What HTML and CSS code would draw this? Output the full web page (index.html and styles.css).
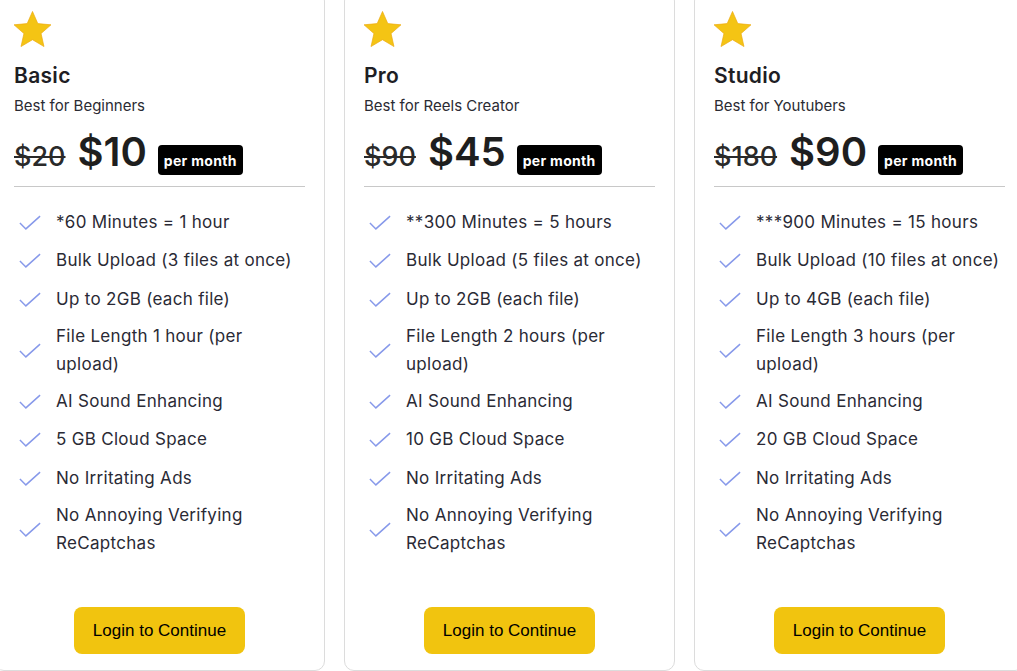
FILE: index.html
```html
<!DOCTYPE html>
<html lang="en">
<head>
<meta charset="utf-8">
<title>Pricing</title>
<link rel="stylesheet" href="styles.css">
</head>
<body>
<div class="pricing">
  <div class="card">
    <svg class="star" viewBox="1.2 1.6 21.6 20.5"><path d="M12 1.6l3.1 7.1 7.7.7-5.8 5.1 1.7 7.6L12 18.1l-6.7 4 1.7-7.6L1.2 9.4l7.7-.7z"/></svg>
    <h2 class="plan">Basic</h2>
    <p class="tagline">Best for Beginners</p>
    <div class="price"><s class="old">$20</s><span class="now">$10</span><span class="per">per month</span></div>
    <ul class="features">
      <li><svg class="check" viewBox="0 0 24 16"><path d="M1 8.5l6.5 6.5L23 1"/></svg><span>*60 Minutes = 1 hour</span></li>
      <li><svg class="check" viewBox="0 0 24 16"><path d="M1 8.5l6.5 6.5L23 1"/></svg><span>Bulk Upload (3 files at once)</span></li>
      <li><svg class="check" viewBox="0 0 24 16"><path d="M1 8.5l6.5 6.5L23 1"/></svg><span>Up to 2GB (each file)</span></li>
      <li><svg class="check" viewBox="0 0 24 16"><path d="M1 8.5l6.5 6.5L23 1"/></svg><span>File Length 1 hour (per upload)</span></li>
      <li><svg class="check" viewBox="0 0 24 16"><path d="M1 8.5l6.5 6.5L23 1"/></svg><span>AI Sound Enhancing</span></li>
      <li><svg class="check" viewBox="0 0 24 16"><path d="M1 8.5l6.5 6.5L23 1"/></svg><span>5 GB Cloud Space</span></li>
      <li><svg class="check" viewBox="0 0 24 16"><path d="M1 8.5l6.5 6.5L23 1"/></svg><span>No Irritating Ads</span></li>
      <li><svg class="check" viewBox="0 0 24 16"><path d="M1 8.5l6.5 6.5L23 1"/></svg><span>No Annoying Verifying ReCaptchas</span></li>
    </ul>
    <button class="cta">Login to Continue</button>
  </div>
  <div class="card">
    <svg class="star" viewBox="1.2 1.6 21.6 20.5"><path d="M12 1.6l3.1 7.1 7.7.7-5.8 5.1 1.7 7.6L12 18.1l-6.7 4 1.7-7.6L1.2 9.4l7.7-.7z"/></svg>
    <h2 class="plan">Pro</h2>
    <p class="tagline">Best for Reels Creator</p>
    <div class="price"><s class="old">$90</s><span class="now">$45</span><span class="per">per month</span></div>
    <ul class="features">
      <li><svg class="check" viewBox="0 0 24 16"><path d="M1 8.5l6.5 6.5L23 1"/></svg><span>**300 Minutes = 5 hours</span></li>
      <li><svg class="check" viewBox="0 0 24 16"><path d="M1 8.5l6.5 6.5L23 1"/></svg><span>Bulk Upload (5 files at once)</span></li>
      <li><svg class="check" viewBox="0 0 24 16"><path d="M1 8.5l6.5 6.5L23 1"/></svg><span>Up to 2GB (each file)</span></li>
      <li><svg class="check" viewBox="0 0 24 16"><path d="M1 8.5l6.5 6.5L23 1"/></svg><span>File Length 2 hours (per upload)</span></li>
      <li><svg class="check" viewBox="0 0 24 16"><path d="M1 8.5l6.5 6.5L23 1"/></svg><span>AI Sound Enhancing</span></li>
      <li><svg class="check" viewBox="0 0 24 16"><path d="M1 8.5l6.5 6.5L23 1"/></svg><span>10 GB Cloud Space</span></li>
      <li><svg class="check" viewBox="0 0 24 16"><path d="M1 8.5l6.5 6.5L23 1"/></svg><span>No Irritating Ads</span></li>
      <li><svg class="check" viewBox="0 0 24 16"><path d="M1 8.5l6.5 6.5L23 1"/></svg><span>No Annoying Verifying ReCaptchas</span></li>
    </ul>
    <button class="cta">Login to Continue</button>
  </div>
  <div class="card">
    <svg class="star" viewBox="1.2 1.6 21.6 20.5"><path d="M12 1.6l3.1 7.1 7.7.7-5.8 5.1 1.7 7.6L12 18.1l-6.7 4 1.7-7.6L1.2 9.4l7.7-.7z"/></svg>
    <h2 class="plan">Studio</h2>
    <p class="tagline">Best for Youtubers</p>
    <div class="price"><s class="old">$180</s><span class="now">$90</span><span class="per">per month</span></div>
    <ul class="features">
      <li><svg class="check" viewBox="0 0 24 16"><path d="M1 8.5l6.5 6.5L23 1"/></svg><span>***900 Minutes = 15 hours</span></li>
      <li><svg class="check" viewBox="0 0 24 16"><path d="M1 8.5l6.5 6.5L23 1"/></svg><span>Bulk Upload (10 files at once)</span></li>
      <li><svg class="check" viewBox="0 0 24 16"><path d="M1 8.5l6.5 6.5L23 1"/></svg><span>Up to 4GB (each file)</span></li>
      <li><svg class="check" viewBox="0 0 24 16"><path d="M1 8.5l6.5 6.5L23 1"/></svg><span>File Length 3 hours (per upload)</span></li>
      <li><svg class="check" viewBox="0 0 24 16"><path d="M1 8.5l6.5 6.5L23 1"/></svg><span>AI Sound Enhancing</span></li>
      <li><svg class="check" viewBox="0 0 24 16"><path d="M1 8.5l6.5 6.5L23 1"/></svg><span>20 GB Cloud Space</span></li>
      <li><svg class="check" viewBox="0 0 24 16"><path d="M1 8.5l6.5 6.5L23 1"/></svg><span>No Irritating Ads</span></li>
      <li><svg class="check" viewBox="0 0 24 16"><path d="M1 8.5l6.5 6.5L23 1"/></svg><span>No Annoying Verifying ReCaptchas</span></li>
    </ul>
    <button class="cta">Login to Continue</button>
  </div>
</div>
</body>
</html>
```
FILE: styles.css
```css
html, body {
  margin: 0;
  padding: 0;
  background: #fff;
  overflow: hidden;
}
body {
  font-family: "Inter", "Noto Sans", sans-serif;
  color: #2a2a35;
}
.pricing {
  display: flex;
  gap: 19px;
  margin: -9px 0 0 -6px;
  width: 1040px;
}
.card {
  box-sizing: border-box;
  flex: 0 0 331px;
  height: 680px;
  border: 1px solid #dcdcdc;
  border-radius: 10px;
  padding: 19px 19px 16px;
  display: flex;
  flex-direction: column;
}
.star {
  display: block;
  width: 37px;
  height: 36px;
  fill: #f4c414;
  stroke: #eeaa10;
  stroke-width: 0.4;
}
.plan {
  margin: 14px 0 0;
  font-size: 21px;
  line-height: 30px;
  font-weight: 600;
  letter-spacing: 0.3px;
  color: #1e1e24;
}
.tagline {
  margin: 0;
  font-size: 15px;
  line-height: 30px;
  color: #2b2b33;
}
.price {
  display: flex;
  align-items: baseline;
  margin-top: 7px;
  padding-bottom: 5px;
  border-bottom: 1px solid #c8c8c8;
}
.old {
  font-size: 27px;
  line-height: 48px;
  font-weight: 500;
  color: #2a2a2a;
  margin-right: 12px;
}
.now {
  font-size: 40px;
  line-height: 48px;
  font-weight: 600;
  color: #1e1e1e;
  margin-right: 11px;
}
.per {
  background: #000;
  color: #fff;
  font-size: 14px;
  font-weight: 700;
  letter-spacing: 0.3px;
  line-height: 19px;
  padding: 6px 6px 5px;
  border-radius: 4px;
}
.features {
  list-style: none;
  margin: 19px 0 0;
  padding: 0;
  display: flex;
  flex-direction: column;
  gap: 6.5px;
}
.features li {
  display: flex;
  align-items: center;
  min-height: 32px;
  font-size: 17px;
  letter-spacing: 0.3px;
  line-height: 28.5px;
}
.check {
  flex: 0 0 22px;
  width: 22px;
  height: 15px;
  margin: 0 15px 0 5px;
  fill: none;
  stroke: #8799ea;
  stroke-width: 1.6;
}
.cta {
  margin: auto auto 0;
  width: 171px;
  height: 47px;
  border: none;
  border-radius: 8px;
  background: #f1c40f;
  color: #000;
  font-family: "Liberation Sans", Arial, sans-serif;
  font-size: 17px;
}
```
